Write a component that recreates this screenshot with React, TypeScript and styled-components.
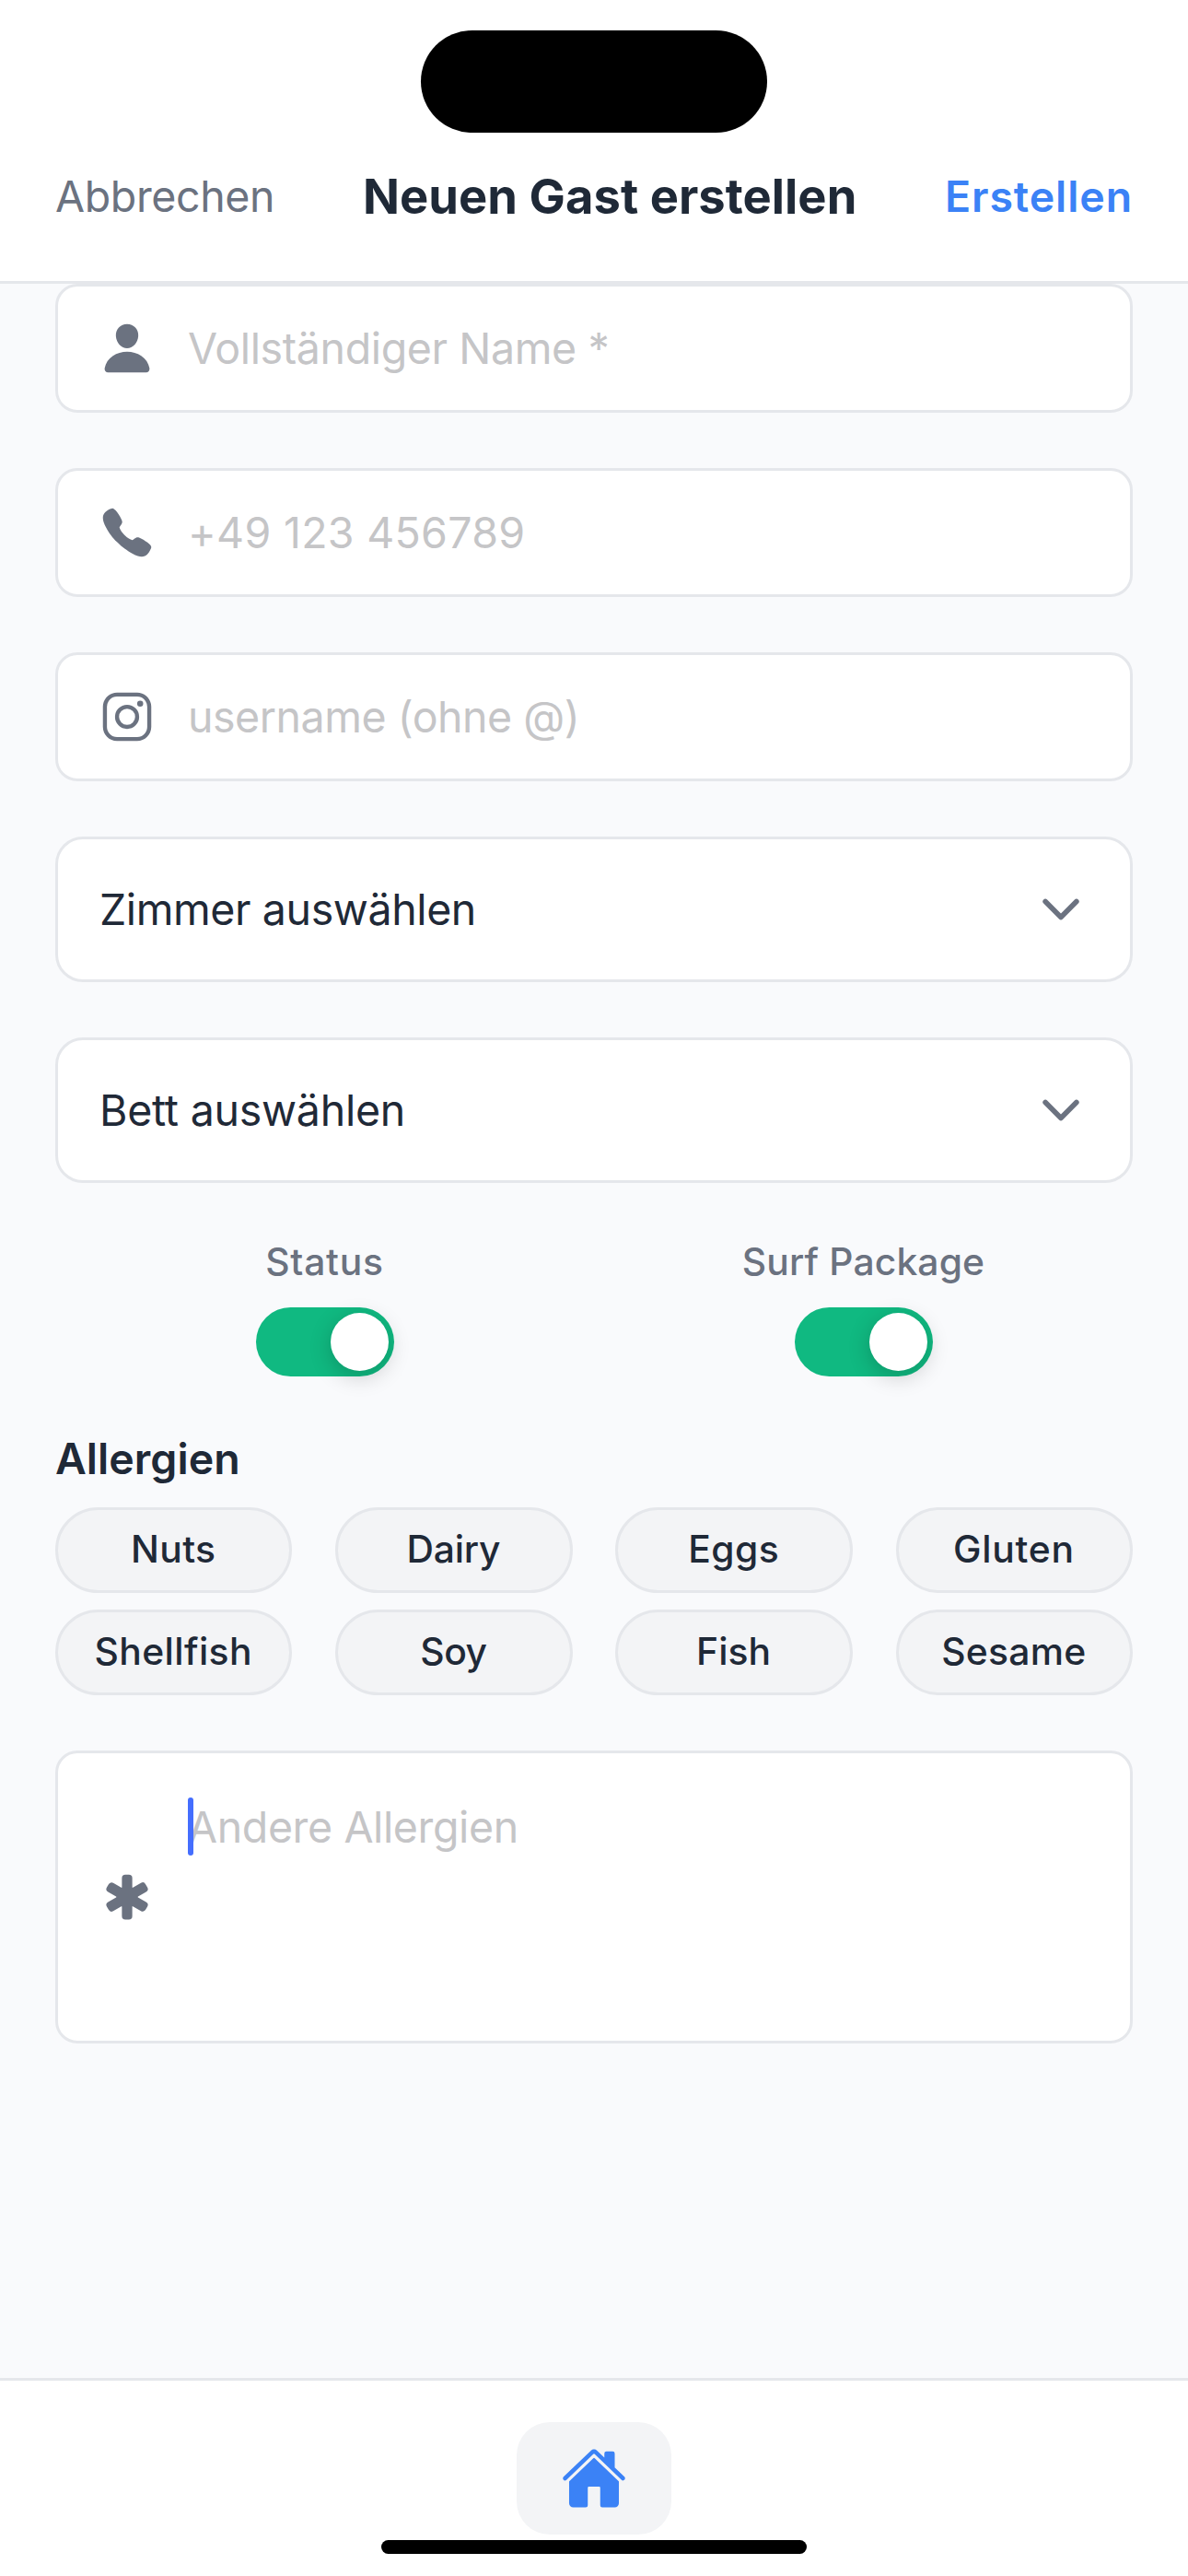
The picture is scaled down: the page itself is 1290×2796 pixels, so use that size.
import React from "react";
import styled, { createGlobalStyle } from "styled-components";
import {
  IoCall,
  IoChevronDown,
  IoHome,
  IoLogoInstagram,
  IoMedical,
  IoPerson,
} from "react-icons/io5";

const color = {
  surface: "#ffffff",
  page: "#f9fafc",
  muted: "#f3f4f6",
  border: "#e5e7eb",
  ink: "#1f2937",
  gray: "#6b7280",
  placeholder: "#c5c5c7",
  blue: "#3b82f6",
  caret: "#456efe",
  green: "#10b981",
};

const GlobalStyle = createGlobalStyle`
  * {
    box-sizing: border-box;
  }
  body {
    margin: 0;
    background: ${color.surface};
    font-family: Inter, "Liberation Sans", sans-serif;
    color: ${color.ink};
  }
  button {
    font-family: inherit;
    color: inherit;
    margin: 0;
  }
  svg {
    display: block;
    flex: none;
  }
`;

const Screen = styled.div`
  width: 1290px;
  height: 2796px;
  display: flex;
  flex-direction: column;
  overflow: hidden;
  background: ${color.page};
`;

const Header = styled.header`
  height: 308px;
  flex: none;
  display: flex;
  flex-direction: column;
  align-items: center;
  padding-top: 33px;
  gap: 37px;
  background: ${color.surface};
  border-bottom: 3px solid ${color.border};
`;

const Island = styled.div`
  width: 376px;
  height: 111px;
  flex: none;
  border-radius: 56px;
  background: #000000;
`;

const HeaderRow = styled.div`
  width: 100%;
  padding: 0 60px;
  display: grid;
  grid-template-columns: 334px 1fr auto;
  align-items: center;
`;

const Text = styled.span<{ $track?: number }>`
  letter-spacing: ${(p) => p.$track ?? 0}px;
  white-space: nowrap;
`;

const HeaderAction = styled(Text)<{ $primary?: boolean }>`
  font-size: 46.5px;
  line-height: 64px;
  font-weight: ${(p) => (p.$primary ? 600 : 400)};
  color: ${(p) => (p.$primary ? color.blue : color.gray)};
`;

const Title = styled(Text)`
  font-size: 52.5px;
  line-height: 64px;
  font-weight: 700;
`;

const Form = styled.main`
  flex: 1;
  padding: 0 60px;
  display: flex;
  flex-direction: column;
  gap: 60px;
`;

const Field = styled.label<{ $tall?: boolean }>`
  height: ${(p) => (p.$tall ? 318 : 140)}px;
  flex: none;
  display: flex;
  align-items: center;
  gap: 36px;
  padding: 0 45px;
  background: ${color.surface};
  border: 3px solid ${color.border};
  border-radius: 24px;
  color: ${color.gray};
`;

const Placeholder = styled(Text)`
  font-size: 46.5px;
  line-height: 58px;
  color: ${color.placeholder};
`;

const AreaText = styled.div`
  align-self: stretch;
  display: flex;
  align-items: flex-start;
  padding-top: 48px;
`;

const Caret = styled.i`
  width: 6px;
  height: 63px;
  margin-right: -6px;
  border-radius: 3px;
  background: ${color.caret};
  z-index: 1;
`;

const AreaPlaceholder = styled(Placeholder)`
  line-height: 64px;
`;

const Select = styled.button`
  height: 158px;
  flex: none;
  display: flex;
  align-items: center;
  justify-content: space-between;
  padding: 0 45px;
  background: ${color.surface};
  border: 3px solid ${color.border};
  border-radius: 30px;
`;

const SelectValue = styled(Text)`
  font-size: 46.5px;
  line-height: 58px;
  font-weight: 400;
`;

const SelectIcon = styled(IoChevronDown)`
  color: ${color.gray};
`;

const ToggleRow = styled.div`
  display: grid;
  grid-template-columns: 1fr 1fr;
`;

const ToggleItem = styled.div`
  display: flex;
  flex-direction: column;
  align-items: center;
  gap: 25px;
`;

const ToggleLabel = styled(Text)`
  font-size: 40.8px;
  line-height: 50px;
  font-weight: 500;
  color: ${color.gray};
`;

const Track = styled.div`
  width: 150px;
  height: 75px;
  padding: 6px;
  display: flex;
  justify-content: flex-end;
  border-radius: 38px;
  background: ${color.green};
`;

const Thumb = styled.div`
  width: 63px;
  height: 63px;
  border-radius: 50%;
  background: ${color.surface};
  box-shadow: 0 6px 24px rgba(0, 0, 0, 0.2);
`;

const Section = styled.section`
  display: flex;
  flex-direction: column;
  gap: 24px;
`;

const SectionTitle = styled(Text)`
  font-size: 46.5px;
  line-height: 58px;
  font-weight: 600;
`;

const ChipGrid = styled.div`
  display: grid;
  grid-template-columns: repeat(4, 257.4px);
  justify-content: space-between;
  row-gap: 18px;
`;

const Chip = styled.button`
  height: 93px;
  padding: 0 1px 2px 0;
  display: flex;
  align-items: center;
  justify-content: center;
  background: ${color.muted};
  border: 3px solid ${color.border};
  border-radius: 47px;
`;

const ChipLabel = styled(Text)`
  font-size: 40.8px;
  line-height: 49px;
  font-weight: 500;
`;

const TabBar = styled.nav`
  height: 215px;
  flex: none;
  display: flex;
  flex-direction: column;
  align-items: center;
  padding-top: 45px;
  gap: 6px;
  background: ${color.surface};
  border-top: 3px solid ${color.border};
`;

const HomeTab = styled.div`
  width: 168px;
  height: 122px;
  display: flex;
  align-items: center;
  justify-content: center;
  border-radius: 36px;
  background: ${color.muted};
  color: ${color.blue};
`;

const HomeIndicator = styled.div`
  width: 462px;
  height: 15px;
  border-radius: 8px;
  background: #000000;
`;

const fields = [
  { icon: IoPerson, text: "Vollständiger Name *", track: -0.38 },
  { icon: IoCall, text: "+49 123 456789", track: 0.3 },
  { icon: IoLogoInstagram, text: "username (ohne @)", track: -0.47 },
];

const selects = [
  { text: "Zimmer auswählen", track: -0.4 },
  { text: "Bett auswählen", track: -0.25 },
];

const toggles = [
  { text: "Status", track: 0.79 },
  { text: "Surf Package", track: 0.14 },
];

const allergies = [
  { text: "Nuts", track: 0.43 },
  { text: "Dairy", track: -0.15 },
  { text: "Eggs", track: 0.45 },
  { text: "Gluten", track: 0.75 },
  { text: "Shellfish", track: 0.4 },
  { text: "Soy", track: -0.46 },
  { text: "Fish", track: 0.04 },
  { text: "Sesame", track: 0.28 },
];

export default function App() {
  return (
    <>
      <GlobalStyle />
      <Screen>
        <Header>
          <Island />
          <HeaderRow>
            <HeaderAction $track={-0.38}>Abbrechen</HeaderAction>
            <Title $track={0.03}>Neuen Gast erstellen</Title>
            <HeaderAction $primary $track={0.9}>
              Erstellen
            </HeaderAction>
          </HeaderRow>
        </Header>

        <Form>
          {fields.map(({ icon: Icon, text, track }) => (
            <Field key={text}>
              <Icon size={60} />
              <Placeholder $track={track}>{text}</Placeholder>
            </Field>
          ))}

          {selects.map(({ text, track }) => (
            <Select key={text}>
              <SelectValue $track={track}>{text}</SelectValue>
              <SelectIcon size={60} />
            </Select>
          ))}

          <ToggleRow>
            {toggles.map(({ text, track }) => (
              <ToggleItem key={text}>
                <ToggleLabel $track={track}>{text}</ToggleLabel>
                <Track>
                  <Thumb />
                </Track>
              </ToggleItem>
            ))}
          </ToggleRow>

          <Section>
            <SectionTitle $track={0.04}>Allergien</SectionTitle>
            <ChipGrid>
              {allergies.map(({ text, track }) => (
                <Chip key={text}>
                  <ChipLabel $track={track}>{text}</ChipLabel>
                </Chip>
              ))}
            </ChipGrid>
          </Section>

          <Field $tall>
            <IoMedical size={60} />
            <AreaText>
              <Caret />
              <AreaPlaceholder $track={-0.38}>Andere Allergien</AreaPlaceholder>
            </AreaText>
          </Field>
        </Form>

        <TabBar>
          <HomeTab>
            <IoHome size={72} />
          </HomeTab>
          <HomeIndicator />
        </TabBar>
      </Screen>
    </>
  );
}
